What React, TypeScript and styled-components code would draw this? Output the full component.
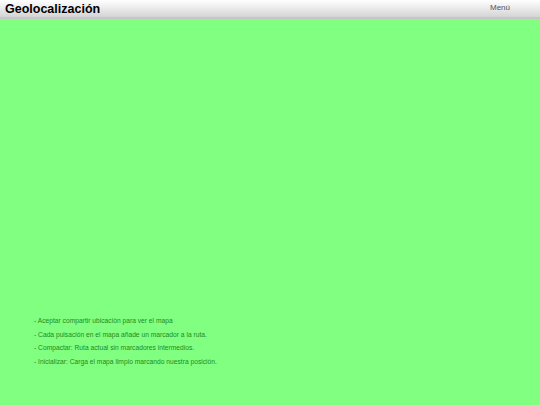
import React from "react";
import styled, { createGlobalStyle } from "styled-components";

const Global = createGlobalStyle`
  html, body { margin: 0; padding: 0; height: 100%; }
  body { font-family: "Liberation Sans", Arial, sans-serif; background: #80ff80; }
  #root { height: 100%; }
`;

const Page = styled.div`
  width: 540px;
  height: 405px;
  display: flex;
  flex-direction: column;
  background: #80ff80;
  overflow: hidden;
`;

const Header = styled.div`
  height: 17px;
  flex: 0 0 17px;
  display: flex;
  align-items: center;
  justify-content: space-between;
  padding: 0 30px 0 5px;
  background: linear-gradient(#ffffff, #d4d4d4);
  border-bottom: 2px solid #c6c6c6;
`;

const Title = styled.h1`
  margin: 2px 0 0;
  font-size: 12.5px;
  font-weight: bold;
  color: #000;
  line-height: 17px;
`;

const MenuButton = styled.span`
  font-size: 8px;
  color: #555;
  line-height: 17px;
  margin-top: -2px;
`;

const Map = styled.div`
  flex: 1;
  display: flex;
  flex-direction: column;
  justify-content: flex-end;
  padding: 0 0 37px 34px;
`;

const Note = styled.p`
  margin: 0;
  font-size: 6.7px;
  line-height: 13.5px;
  color: #228a22;
`;

const notes = [
  "- Aceptar compartir ubicación para ver el mapa",
  "- Cada pulsación en el mapa añade un marcador a la ruta.",
  "- Compactar: Ruta actual sin marcadores intermedios.",
  "- Inicializar: Carga el mapa limpio marcando nuestra posición.",
];

export default function App() {
  return (
    <Page>
      <Global />
      <Header>
        <Title>Geolocalización</Title>
        <MenuButton>Menú</MenuButton>
      </Header>
      <Map>
        {notes.map((n) => (
          <Note key={n}>{n}</Note>
        ))}
      </Map>
    </Page>
  );
}
